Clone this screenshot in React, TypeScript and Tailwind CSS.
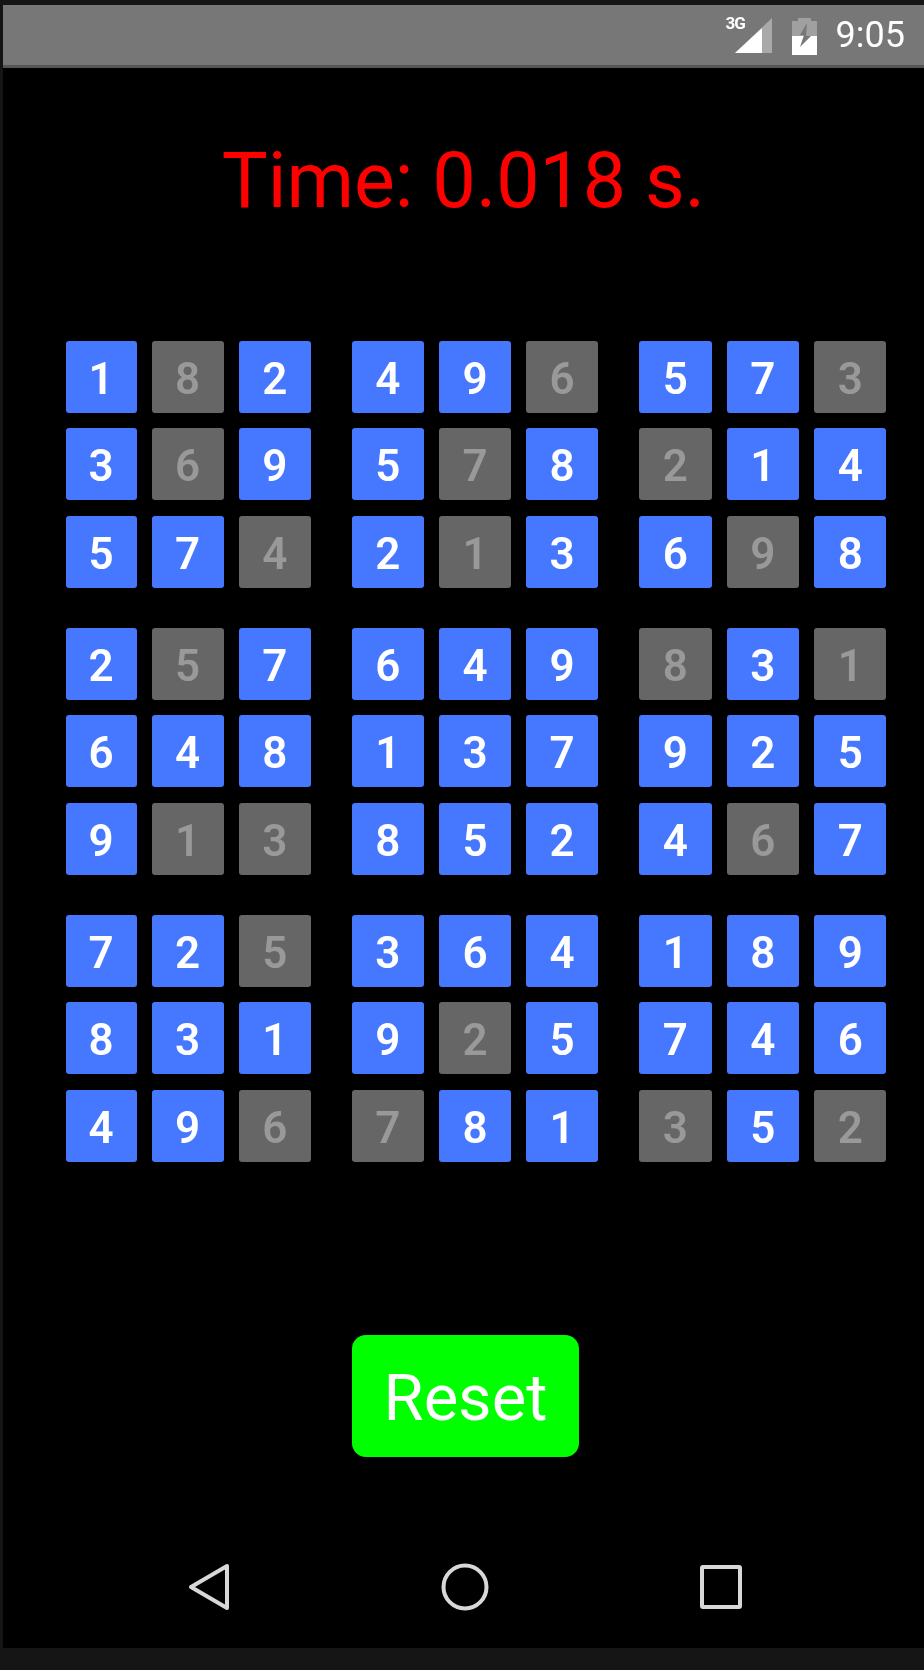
const ROWS: string[][] = [
  ["1","-8","2","4","9","-6","5","7","-3"],
  ["3","-6","9","5","-7","8","-2","1","4"],
  ["5","7","-4","2","-1","3","6","-9","8"],
  ["2","-5","7","6","4","9","-8","3","-1"],
  ["6","4","8","1","3","7","9","2","5"],
  ["9","-1","-3","8","5","2","4","-6","7"],
  ["7","2","-5","3","6","4","1","8","9"],
  ["8","3","1","9","-2","5","7","4","6"],
  ["4","9","-6","-7","8","1","-3","5","-2"],
];

function Cell({ v }: { v: string }) {
  const off = v.startsWith("-");
  return (
    <div
      className={`flex h-[72px] items-center justify-center rounded-[3px] pt-[4px] text-[44px] font-semibold leading-none ${
        off ? "bg-[#666666] text-[#999999]" : "bg-[#4577ff] text-white"
      }`}
    >
      {off ? v.slice(1) : v}
    </div>
  );
}

function Row({ cells }: { cells: string[] }) {
  return (
    <div className="grid grid-cols-[71px_72px_72.5px_10.7px_72.3px_72px_72.3px_11px_72.3px_72.5px_72.3px] gap-x-[15px]">
      {cells.map((v, i) => (
        <div key={i} className="contents">
          {(i === 3 || i === 6) && <div />}
          <Cell v={v} />
        </div>
      ))}
    </div>
  );
}

export default function App() {
  return (
    <div className="h-[1670px] w-[924px] bg-[#151515] pl-[3px] pt-[5px] font-['Roboto',sans-serif]">
      <div className="flex h-[1643px] w-[921px] flex-col bg-black blur-[0.5px]">
        <div className="flex h-[63px] items-center justify-end border-b-[3px] border-[#555555] bg-[#777777] pr-[19px]">
          <div className="relative mr-[20px] h-[40px] w-[46px]">
            <span className="absolute left-0 top-0 text-[17px] font-bold leading-none tracking-[-1px] text-white">3G</span>
            <svg width="46" height="40" viewBox="0 0 46 40" className="block">
              <path d="M9 38 L46 3 V38 Z" fill="#a9a9a9" />
              <path d="M9 38 L36 13 V38 Z" fill="#ffffff" />
            </svg>
          </div>
          <svg width="25" height="40" viewBox="0 0 25 40" className="mr-[19px] block">
            <path d="M0 6 H6 V3 H19 V6 H25 V40 H0 Z" fill="#a0a0a0" />
            <path d="M0 21 H25 V40 H0 Z" fill="#ffffff" />
            <path d="M15 8 L8 20 H12 L8 32 L19 21 H14 Z" fill="#777777" />
          </svg>
          <span className="text-[36px] leading-none text-white">9:05</span>
        </div>
        <div className="flex h-[152px] items-end justify-center text-[77px] leading-none text-[#ff0000]">
          Time: 0.018 s.
        </div>
        <div className="mt-[121px] flex flex-col pl-[62.5px]">
          {ROWS.map((r, i) => (
            <div key={i} className={i === 3 ? "mt-[40px]" : i === 6 ? "mt-[40.5px]" : i > 0 ? "mt-[15.4px]" : ""}>
              <Row cells={r} />
            </div>
          ))}
        </div>
        <button className="ml-[349px] mt-[173.5px] h-[122px] w-[227px] rounded-[14px] bg-[#00ff00] pt-[4px] text-[65px] font-[430] leading-none text-white">
          Reset
        </button>
        <div className="mt-auto flex h-[85px] items-start gap-[211px] pl-[185px]">
          <svg width="42" height="48" viewBox="0 0 42 48" fill="none" stroke="#d8d8d8" strokeWidth="4" strokeLinejoin="round">
            <path d="M39 3 V45 L3 24 Z" />
          </svg>
          <svg width="48" height="48" viewBox="0 0 48 48" fill="none" stroke="#d8d8d8" strokeWidth="4">
            <circle cx="24" cy="24" r="21.5" />
          </svg>
          <svg width="42" height="44" viewBox="0 0 42 44" fill="none" stroke="#d8d8d8" strokeWidth="4" strokeLinejoin="round" className="mt-[2px]">
            <rect x="2" y="2" width="38" height="40" rx="1" />
          </svg>
        </div>
      </div>
    </div>
  );
}
